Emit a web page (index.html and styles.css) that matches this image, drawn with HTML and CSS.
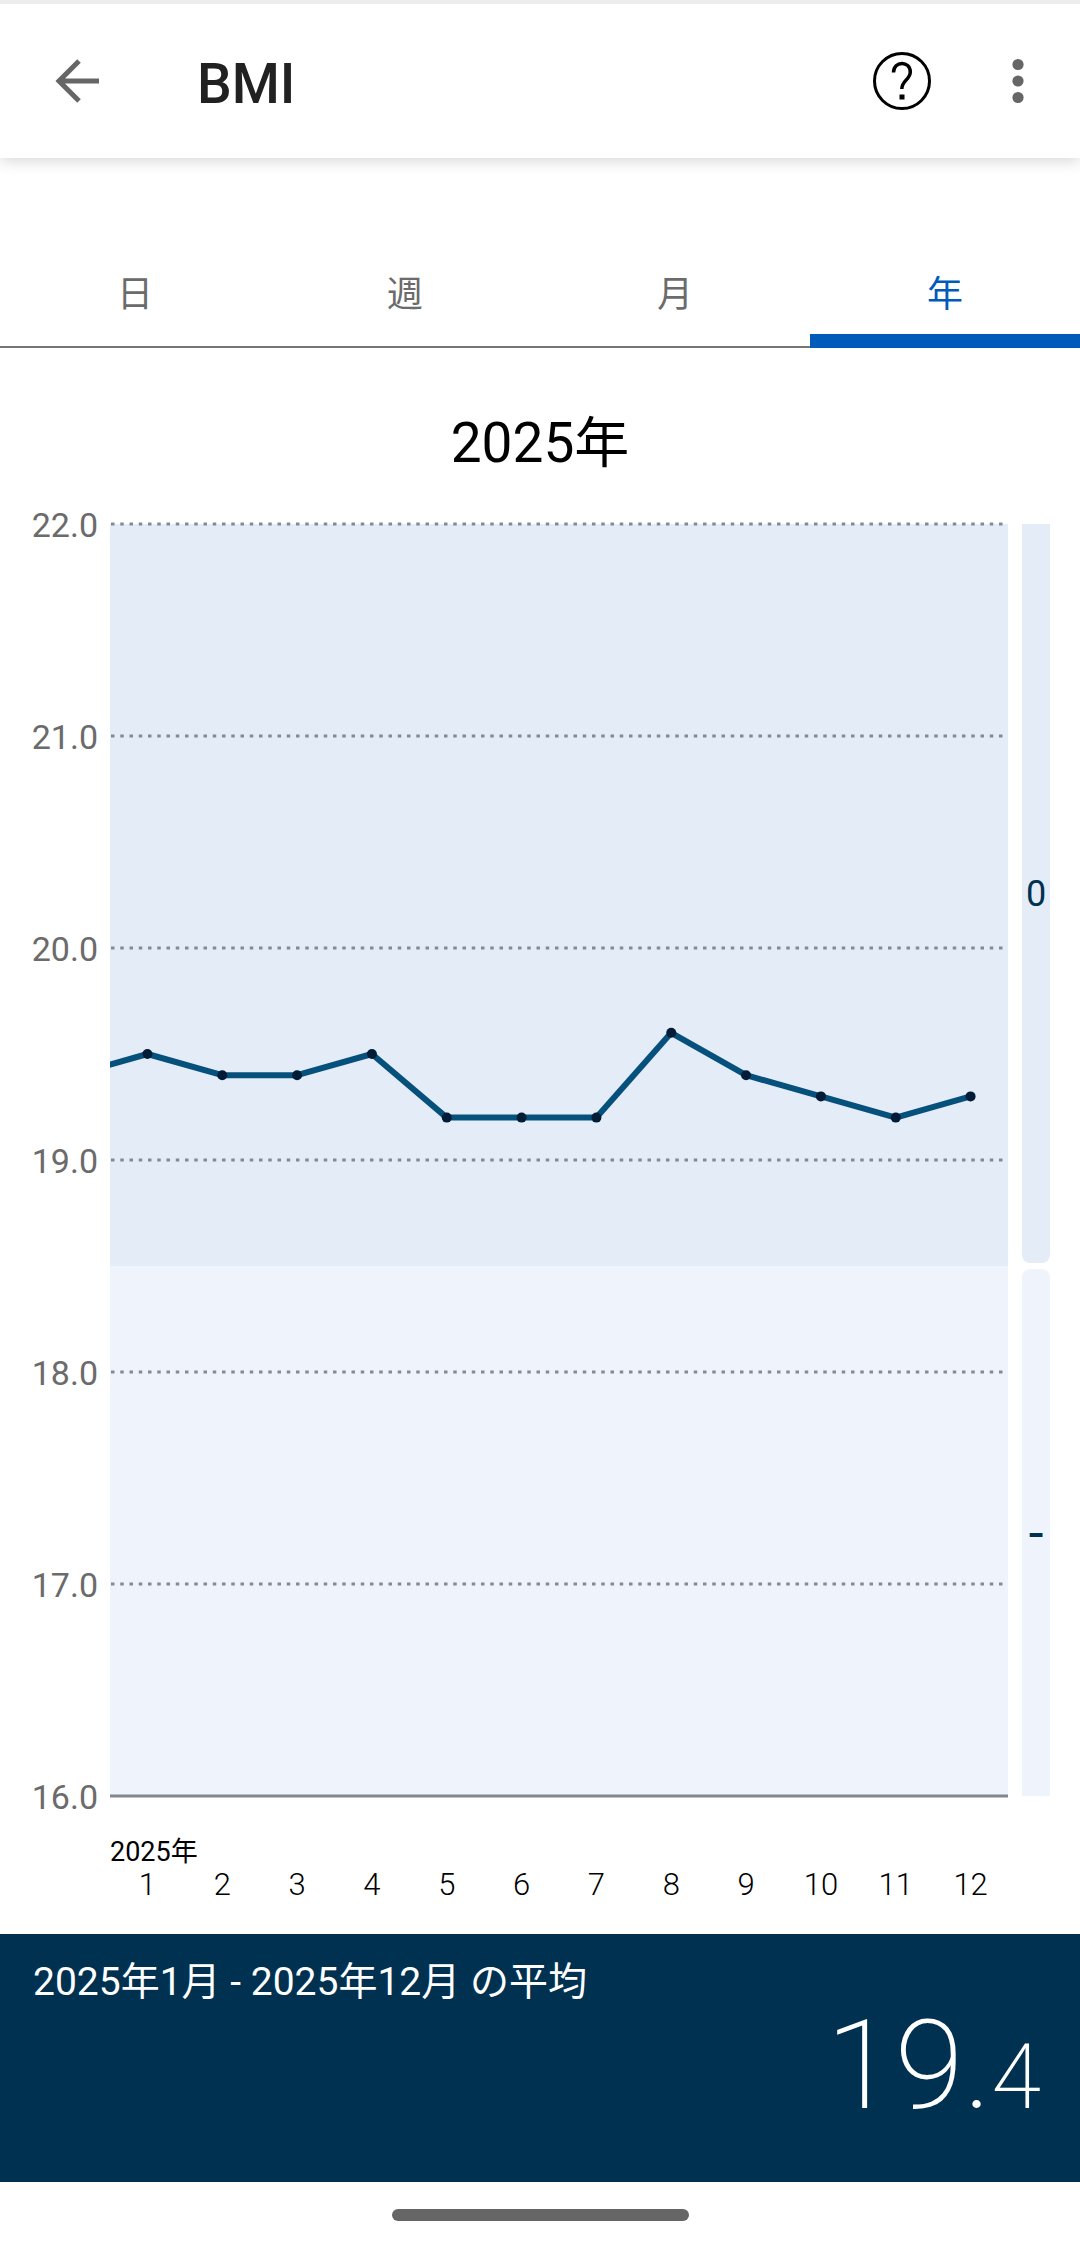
FILE: index.html
```
<!DOCTYPE html>
<html lang="ja">
<head>
  <meta charset="UTF-8">
  <meta name="viewport" content="width=device-width, initial-scale=1.0">
  <link rel="stylesheet" href="styles.css">
  <title>BMI</title>
</head>
<body>
  <header class="app-bar">
    <button class="icon-button" aria-label="戻る">
      <svg width="44" height="44" viewBox="0 0 44 44" fill="none" stroke="#666" stroke-width="5">
        <path d="M24 2L4 22l20 20M3.500 22H44"/>
      </svg>
    </button>
    <h1>BMI</h1>
    <button class="icon-button help" aria-label="ヘルプ">
      <svg width="58" height="58" viewBox="0 0 58 58" fill="none" stroke="#000" stroke-width="3">
        <circle cx="29" cy="29" r="27.500"/>
        <path d="M20.500 20.500C20.500 8.500 37.300 8.500 37.300 20C37.300 27.500 28.800 28.500 28.800 37" stroke-width="3.500"/>
        <path d="M26.500 45h5" stroke-width="5"/>
      </svg>
    </button>
    <button class="icon-button" aria-label="メニュー">
      <svg width="12" height="46" viewBox="0 0 12 46" fill="#666">
        <circle cx="6" cy="6.500" r="5.600"/>
        <circle cx="6" cy="23" r="5.600"/>
        <circle cx="6" cy="39.500" r="5.600"/>
      </svg>
    </button>
  </header>

  <nav class="tabs">
    <button>日</button>
    <button>週</button>
    <button>月</button>
    <button class="active">年</button>
  </nav>

  <main>
    <h2>2025年</h2>

    <div class="chart">
      <div class="y-axis">
        <span>22.0</span>
        <span>21.0</span>
        <span>20.0</span>
        <span>19.0</span>
        <span>18.0</span>
        <span>17.0</span>
        <span>16.0</span>
      </div>

      <svg class="plot" viewBox="0 0 898 1272">
        <rect width="898" height="742" fill="#e4ecf7"/>
        <rect y="742" width="898" height="530" fill="#eff4fc"/>
        <path class="grid" d="M1 0H893M1 212H893M1 424H893M1 636H893M1 848H893M1 1060H893"/>
        <path class="base" d="M0 1272H898"/>
        <g id="series"></g>
      </svg>

      <div class="range">
        <div class="range-normal">0</div>
        <div class="range-low">-</div>
      </div>

      <div class="x-axis">
        <div class="x-year">2025年</div>
        <div class="months">
          <span>1</span>
          <span>2</span>
          <span>3</span>
          <span>4</span>
          <span>5</span>
          <span>6</span>
          <span>7</span>
          <span>8</span>
          <span>9</span>
          <span>10</span>
          <span>11</span>
          <span>12</span>
        </div>
      </div>
    </div>
  </main>

  <section class="summary">
    <p>2025年1月 - 2025年12月 の平均</p>
    <div class="average">19.<small>4</small></div>
  </section>

  <div class="home-bar"></div>

  <script>
    // first value is December of the previous year, cut off by the left edge
    const values = [19.4, 19.5, 19.4, 19.4, 19.5, 19.2, 19.2, 19.2, 19.6, 19.4, 19.3, 19.2, 19.3];
    const step = 898 / 12;
    const points = values.map((v, i) => [(i - 0.5) * step, (22 - v) * 212]);

    let html = '<polyline class="line" points="' + points.join(' ') + '"/>';
    points.slice(1).forEach(([x, y]) => {
      html += `<circle class="dot" cx="${x}" cy="${y}" r="5"/>`;
    });
    document.getElementById('series').innerHTML = html;
  </script>
</body>
</html>
```
FILE: styles.css
```
body {
  margin: 0;
  min-height: 100vh;
  display: flex;
  flex-direction: column;
  background-color: #fff;
  color: #000;
  font-family: Roboto, "Noto Sans CJK JP", sans-serif;
}

button {
  padding: 0;
  border: none;
  background: none;
  font: inherit;
  cursor: pointer;
}

.app-bar {
  display: flex;
  align-items: center;
  height: 154px;
  padding: 0 56px 0 55px;
  border-top: 4px solid #ececec;
  box-shadow: 0 3px 14px rgba(0, 0, 0, 0.16);
}

.icon-button svg {
  display: block;
}

h1 {
  margin: 0 0 0 98px;
  padding-top: 5px;
  font-size: 55px;
  font-weight: 500;
  line-height: 64px;
  color: #212121;
}

.help {
  margin-left: auto;
  margin-right: 81px;
}

.tabs {
  display: flex;
  margin-top: 84px;
  box-shadow: inset 0 -2px #757575;
}

.tabs button {
  flex: 1;
  height: 106px;
  padding-top: 6px;
  box-sizing: border-box;
  border-bottom: 14px solid transparent;
  font-size: 36px;
  color: #6b6b6b;
}

.tabs .active {
  border-color: #005ab9;
  color: #005ab9;
}

main {
  flex: 1;
}

h2 {
  margin: 55px 0 81px;
  font-size: 55px;
  font-weight: 400;
  line-height: 80px;
  text-align: center;
}

.chart {
  display: grid;
  grid-template-columns: 98px 1fr 28px;
  margin-right: 30px;
  margin-top: -40px;
}

.y-axis {
  display: flex;
  flex-direction: column;
  justify-content: space-between;
  margin: -19px 0 -21px;
  text-align: right;
  font-size: 34px;
  line-height: 40px;
  color: #6b6b6b;
}

.plot {
  display: block;
  width: calc(100% - 26px);
  margin-left: 12px;
  overflow-x: clip;
  overflow-y: visible;
}

.grid {
  fill: none;
  stroke: #858a91;
  stroke-width: 3;
  stroke-dasharray: 3.5 5.75;
}

.base {
  stroke: #82878b;
  stroke-width: 3;
}

.line {
  fill: none;
  stroke: #06507c;
  stroke-width: 6;
  stroke-linejoin: round;
}

.dot {
  fill: #001c36;
}

.range {
  display: grid;
  grid-template-rows: 739fr 527fr;
  gap: 6px;
  color: #003150;
  font-size: 36px;
}

.range div {
  display: flex;
  align-items: center;
  justify-content: center;
}

.range-normal {
  background-color: #e4ecf7;
  border-radius: 0 0 8px 8px;
}

.range .range-low {
  background-color: #eff4fc;
  border-radius: 8px 8px 0 0;
  font-family: Inter, sans-serif;
  font-size: 39px;
  font-weight: 600;
}

.x-axis {
  grid-column: 2;
  margin: 39px 14px 33px 12px;
}

.x-year {
  font-size: 27px;
  line-height: 34px;
}

.months {
  display: grid;
  grid-template-columns: repeat(12, 1fr);
  text-align: center;
  font-size: 31px;
  font-weight: 300;
  line-height: 32px;
}

.summary {
  height: 248px;
  box-sizing: border-box;
  padding: 20px 39px 0 33px;
  background-color: #003150;
  color: #fff;
}

.summary p {
  margin: 0;
  font-size: 39px;
  line-height: 56px;
}

.average {
  text-align: right;
  font-size: 125px;
  font-weight: 200;
  line-height: 112px;
}

.average small {
  font-size: 90px;
}

.home-bar {
  width: 297px;
  height: 12px;
  margin: 27px auto;
  border-radius: 6px;
  background-color: #666;
}
```
